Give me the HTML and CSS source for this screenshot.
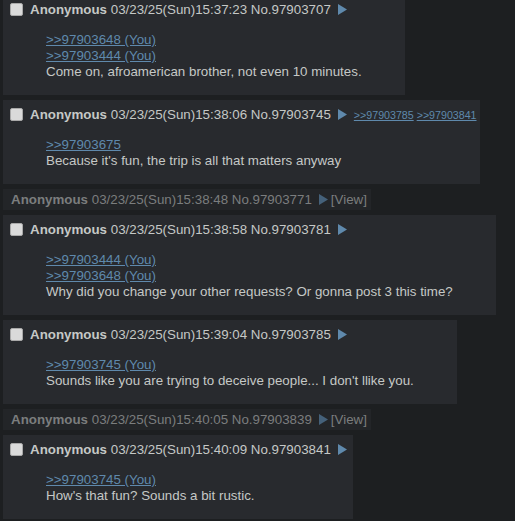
FILE: index.html
```html
<!DOCTYPE html>
<html>
<head>
<meta charset="utf-8">
<link rel="stylesheet" href="styles.css">
</head>
<body>
<div class="thread">
  <div class="post">
    <div class="info"><span class="cb"></span><span class="name">Anonymous</span> <span class="date">03/23/25(Sun)15:37:23</span> <span class="num">No.97903707</span><svg class="menu" viewBox="0 0 9 11"><path d="M0 0L9 5.5L0 11Z"/></svg></div>
    <blockquote><a class="ql" href="#p97903648">&gt;&gt;97903648 (You)</a><br><a class="ql" href="#p97903444">&gt;&gt;97903444 (You)</a><br>Come on, afroamerican brother, not even 10 minutes.</blockquote>
  </div>
  <div class="post">
    <div class="info"><span class="cb"></span><span class="name">Anonymous</span> <span class="date">03/23/25(Sun)15:38:06</span> <span class="num">No.97903745</span><svg class="menu" viewBox="0 0 9 11"><path d="M0 0L9 5.5L0 11Z"/></svg><span class="backlinks"><a class="bl" href="#p97903785">&gt;&gt;97903785</a> <a class="bl" href="#p97903841">&gt;&gt;97903841</a></span></div>
    <blockquote><a class="ql" href="#p97903675">&gt;&gt;97903675</a><br>Because it's fun, the trip is all that matters anyway</blockquote>
  </div>
  <div class="stub">
    <span class="name">Anonymous</span> <span class="date">03/23/25(Sun)15:38:48</span> <span class="num">No.97903771</span><svg class="menu" viewBox="0 0 9 11"><path d="M0 0L9 5.5L0 11Z"/></svg><span class="view">[View]</span>
  </div>
  <div class="post">
    <div class="info"><span class="cb"></span><span class="name">Anonymous</span> <span class="date">03/23/25(Sun)15:38:58</span> <span class="num">No.97903781</span><svg class="menu" viewBox="0 0 9 11"><path d="M0 0L9 5.5L0 11Z"/></svg></div>
    <blockquote><a class="ql" href="#p97903444">&gt;&gt;97903444 (You)</a><br><a class="ql" href="#p97903648">&gt;&gt;97903648 (You)</a><br>Why did you change your other requests? Or gonna post 3 this time?</blockquote>
  </div>
  <div class="post">
    <div class="info"><span class="cb"></span><span class="name">Anonymous</span> <span class="date">03/23/25(Sun)15:39:04</span> <span class="num">No.97903785</span><svg class="menu" viewBox="0 0 9 11"><path d="M0 0L9 5.5L0 11Z"/></svg></div>
    <blockquote><a class="ql" href="#p97903745">&gt;&gt;97903745 (You)</a><br>Sounds like you are trying to deceive people... I don't llike you.</blockquote>
  </div>
  <div class="stub">
    <span class="name">Anonymous</span> <span class="date">03/23/25(Sun)15:40:05</span> <span class="num">No.97903839</span><svg class="menu" viewBox="0 0 9 11"><path d="M0 0L9 5.5L0 11Z"/></svg><span class="view">[View]</span>
  </div>
  <div class="post">
    <div class="info"><span class="cb"></span><span class="name">Anonymous</span> <span class="date">03/23/25(Sun)15:40:09</span> <span class="num">No.97903841</span><svg class="menu" viewBox="0 0 9 11"><path d="M0 0L9 5.5L0 11Z"/></svg></div>
    <blockquote><a class="ql" href="#p97903745">&gt;&gt;97903745 (You)</a><br>How's that fun? Sounds a bit rustic.</blockquote>
  </div>
</div>
</body>
</html>
```

FILE: styles.css
```css
html, body {
  margin: 0;
  padding: 0;
  background: #1d1f21;
}
body {
  font-family: "Liberation Sans", Arial, sans-serif;
  font-size: 10pt;
  color: #c5c8c6;
  overflow: hidden;
}
.thread {
  display: flex;
  flex-direction: column;
  align-items: flex-start;
  gap: 5px;
  margin-top: -5px;
  padding-left: 3px;
}
.post {
  background: #282a2e;
  padding: 3px;
}
.info {
  line-height: 24px;
  height: 21px;
  white-space: nowrap;
}
.cb {
  display: inline-block;
  width: 11px;
  height: 11px;
  background: #dadada;
  border: 1px solid #a9a9a9;
  border-radius: 2px;
  vertical-align: middle;
  margin: -2px 7px 0 4px;
}
.name {
  font-weight: bold;
}
.menu {
  display: inline-block;
  width: 9px;
  height: 11px;
  fill: #5f89ac;
  vertical-align: middle;
  margin: -2px 3px 0 7px;
}
.backlinks {
  margin-left: 4px;
  font-size: 0.8em;
}
a {
  color: #5f89ac;
  text-decoration: underline;
}
blockquote {
  margin: 13px 40px 12px;
  line-height: 16px;
}
.stub {
  background: #232528;
  color: #7b7d7e;
  padding: 3px 4px 2px 8px;
  line-height: 16px;
  white-space: nowrap;
}
.stub .menu {
  fill: #45617a;
  margin-right: 0;
}
.stub .view {
  margin-left: 3px;
}
```
